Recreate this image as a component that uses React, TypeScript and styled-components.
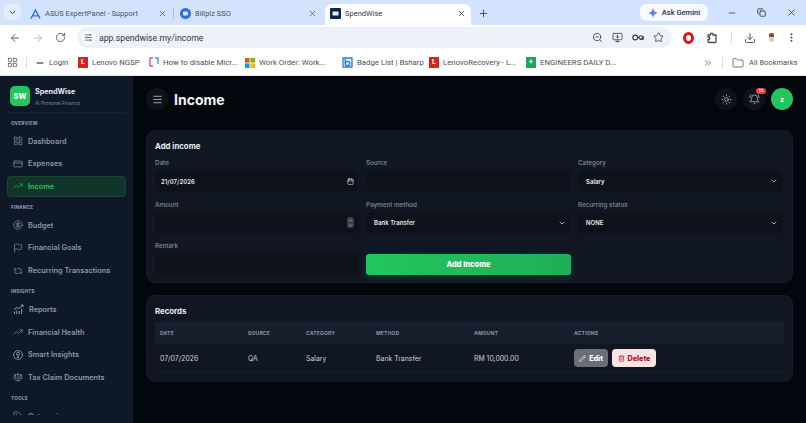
import React from 'react';
import styled, { createGlobalStyle } from 'styled-components';
import {
  ArrowLeft, ArrowRight, RotateCw, SlidersHorizontal, ZoomOut, MonitorDown, Star, Download,
  EllipsisVertical, LayoutGrid, ChevronDown, X, Plus, Minus, Copy, ChevronsRight, Folder,
  CreditCard, TrendingUp, CircleDollarSign, Flag, Repeat2, Scale,
  Tag, Menu, Sun, BellRing, Calendar, Pencil, Trash2, ChevronUp
} from 'lucide-react';

const chromeFont = 'Roboto, "Open Sans", sans-serif';

const GlobalStyle = createGlobalStyle`
  html, body { margin: 0; padding: 0; background: #03060c; }
  body { width: 806px; height: 423px; overflow: hidden; font-family: Inter, sans-serif; }
  * { box-sizing: border-box; }
`;

const Page = styled.div`
  width: 806px;
  height: 423px;
  display: flex;
  flex-direction: column;
  overflow: hidden;
`;

/* browser chrome */
const TabStrip = styled.div`
  height: 25px;
  background: #d3e3fd;
  display: flex;
  align-items: flex-end;
  padding-left: 4px;
  font-family: ${chromeFont};
  color: #3f4650;
`;

const TabMenu = styled.div`
  width: 17px;
  height: 16px;
  margin-bottom: 5px;
  margin-right: 4px;
  border-radius: 5px;
  background: #e3edfd;
  display: flex;
  align-items: center;
  justify-content: center;
  color: #1f2937;
`;

const Tab = styled.div<{ $w: number; $active?: boolean }>`
  width: ${(p) => p.$w}px;
  height: 21px;
  padding: 0 5px 2px;
  display: flex;
  align-items: center;
  gap: 4px;
  font-size: 7.5px;
  border-radius: 7px 7px 0 0;
  background: ${(p) => (p.$active ? '#ffffff' : 'transparent')};
  color: ${(p) => (p.$active ? '#303640' : '#4a5566')};
`;

const TabTitle = styled.span`
  flex: 1;
  white-space: nowrap;
`;

const TabGap = styled.div<{ $w: number; $line?: boolean }>`
  width: ${(p) => p.$w}px;
  height: 21px;
  padding-bottom: 2px;
  display: flex;
  align-items: center;
  justify-content: center;
  &::after {
    content: '';
    display: ${(p) => (p.$line ? 'block' : 'none')};
    width: 1px;
    height: 10px;
    background: #a9bcd8;
  }
`;

const NewTab = styled.div`
  width: 24px;
  height: 21px;
  padding-bottom: 2px;
  display: flex;
  align-items: center;
  justify-content: center;
  color: #333b47;
`;

const Gemini = styled.div`
  margin-left: 145px;
  width: 68px;
  height: 17px;
  margin-bottom: 4px;
  border-radius: 6px;
  background: #f6f9fe;
  display: flex;
  align-items: center;
  justify-content: center;
  gap: 4px;
  font-size: 7.5px;
  font-weight: 500;
  color: #2c3340;
`;

const WindowButtons = styled.div`
  flex: 1;
  height: 21px;
  padding: 0 9px 4px 19px;
  display: flex;
  align-items: center;
  justify-content: space-between;
  color: #1f2630;
`;

const Toolbar = styled.div`
  height: 25px;
  background: #ffffff;
  display: flex;
  align-items: center;
  padding: 0 9px 0 9px;
  color: #454b55;
  font-family: ${chromeFont};
`;

const NavIcons = styled.div`
  width: 68px;
  display: flex;
  align-items: center;
  gap: 11px;
`;

const Address = styled.div`
  width: 595px;
  height: 21px;
  border-radius: 11px;
  background: #edf2fa;
  display: flex;
  align-items: center;
  padding: 0 8px 0 5px;
  font-size: 8.7px;
  color: #2f3540;
  gap: 4px;
`;

const TuneWrap = styled.div`
  width: 13px;
  height: 13px;
  border-radius: 50%;
  background: #ffffff;
  display: flex;
  align-items: center;
  justify-content: center;
`;

const AddressText = styled.span`
  flex: 1;
`;

const AddressIcons = styled.div`
  display: flex;
  align-items: center;
  gap: 9px;
`;

const ToolIcons = styled.div`
  flex: 1;
  padding-left: 11px;
  display: flex;
  align-items: center;
  justify-content: space-between;
`;

const OperaMark = styled.div`
  width: 11px;
  height: 12px;
  border-radius: 50%;
  border: 3px solid #d8141c;
  background: #ffffff;
`;

const ToolDivider = styled.div`
  width: 1px;
  height: 11px;
  background: #d5dbe5;
`;

const ProfileDot = styled.div`
  width: 5px;
  height: 9px;
  border-radius: 2px;
  background: linear-gradient(#8a4a3a 45%, #d7cfc9 45%);
`;

const Bookmarks = styled.div`
  height: 26px;
  background: #ffffff;
  border-bottom: 1px solid #e4e7ec;
  display: flex;
  align-items: center;
  padding-left: 7px;
  color: #4a4f57;
  font-family: ${chromeFont};
  font-size: 7.8px;
`;

const BookmarkSep = styled.div<{ $mx: number }>`
  width: 1px;
  height: 11px;
  background: #d5dbe5;
  margin: 0 ${(p) => p.$mx}px;
`;

const Bookmark = styled.div<{ $w: number }>`
  width: ${(p) => p.$w}px;
  display: flex;
  align-items: center;
  gap: 4px;
  white-space: nowrap;
  flex-shrink: 0;
`;

const BookmarkEnd = styled.div`
  margin-left: 77px;
  display: flex;
  align-items: center;
  gap: 5px;
  white-space: nowrap;
  font-size: 7.5px;
`;

const Fav = styled.div<{ $bg: string }>`
  width: 10px;
  height: 11px;
  flex-shrink: 0;
  background: ${(p) => p.$bg};
  color: #ffffff;
  font-size: 7px;
  font-weight: 700;
  line-height: 11px;
  text-align: center;
`;

/* app */
const AppShell = styled.div`
  flex: 1;
  min-height: 0;
  display: flex;
  background: #03060c;
`;

const Sidebar = styled.aside`
  width: 133px;
  flex-shrink: 0;
  background: #0f1826;
  padding: 10px 7px 8px;
  display: flex;
  flex-direction: column;
`;

const Brand = styled.div`
  height: 27px;
  flex-shrink: 0;
  display: flex;
  align-items: flex-start;
  gap: 5px;
  padding: 0 3px;
  border-bottom: 1px solid #182232;
`;

const BrandLogo = styled.div`
  width: 20px;
  height: 20px;
  border-radius: 5px;
  background: #22c55e;
  color: #ffffff;
  display: flex;
  align-items: center;
  justify-content: center;
  font-size: 7.5px;
  font-weight: 800;
`;

const BrandText = styled.div`
  padding-top: 1px;
`;

const BrandName = styled.div`
  font-size: 7.2px;
  font-weight: 700;
  color: #e6ebf2;
  line-height: 10px;
`;

const BrandSub = styled.div`
  font-size: 4.8px;
  color: #7d8899;
  line-height: 8px;
  margin-top: 2px;
`;

const Nav = styled.nav`
  flex: 1;
  min-height: 0;
  overflow: hidden;
  display: flex;
  flex-direction: column;
`;

const SectionLabel = styled.div<{ $first?: boolean }>`
  font-size: 4.6px;
  font-weight: 800;
  letter-spacing: 0.2px;
  color: #8492a6;
  height: 8px;
  line-height: 8px;
  padding-left: 4px;
  flex-shrink: 0;
  margin-top: ${(p) => (p.$first ? '6.7px' : '5.4px')};
  margin-bottom: 3px;
`;

const NavItem = styled.div<{ $active?: boolean }>`
  height: 21px;
  flex-shrink: 0;
  margin-bottom: 1.6px;
  display: flex;
  align-items: center;
  gap: 5px;
  padding-left: 5px;
  border-radius: 4px;
  font-size: 7.3px;
  font-weight: 600;
  color: ${(p) => (p.$active ? '#22c55e' : '#8b98ab')};
  background: ${(p) => (p.$active ? '#12352b' : 'transparent')};
  border: 1px solid ${(p) => (p.$active ? '#194535' : 'transparent')};
`;

const Main = styled.main`
  flex: 1;
  min-width: 0;
  padding: 12px 13px 0;
  display: flex;
  flex-direction: column;
`;

const Header = styled.header`
  display: flex;
  align-items: center;
  height: 22px;
  margin-bottom: 20px;
`;

const RoundButton = styled.div`
  position: relative;
  width: 22px;
  height: 22px;
  border-radius: 50%;
  background: #0e131b;
  color: #cfd6e0;
  display: flex;
  align-items: center;
  justify-content: center;
`;

const PageTitle = styled.h1`
  flex: 1;
  margin: 0 0 0 6px;
  font-size: 14px;
  font-weight: 700;
  color: #f1f4f8;
`;

const HeaderActions = styled.div`
  display: flex;
  gap: 6px;
`;

const Badge = styled.span`
  position: absolute;
  top: 0;
  right: -1px;
  width: 10px;
  height: 6px;
  border-radius: 3px;
  background: #ef4444;
  color: #ffffff;
  font-size: 4px;
  font-weight: 700;
  line-height: 6px;
  text-align: center;
`;

const Avatar = styled.div`
  width: 22px;
  height: 22px;
  border-radius: 50%;
  background: #22c55e;
  color: #ffffff;
  font-size: 7px;
  font-weight: 700;
  display: flex;
  align-items: center;
  justify-content: center;
`;

const Card = styled.section<{ $h: number; $mb?: number }>`
  height: ${(p) => p.$h}px;
  margin-bottom: ${(p) => p.$mb ?? 0}px;
  border-radius: 9px;
  background: #101723;
  border: 1px solid #131b28;
  padding: 9px 8px 8px;
`;

const CardTitle = styled.h2`
  margin: 0;
  font-size: 7.8px;
  font-weight: 700;
  line-height: 12px;
  color: #e9edf3;
`;

const FormGrid = styled.div`
  margin-top: 5px;
  display: grid;
  grid-template-columns: 204px 205px 205px;
  column-gap: 7px;
`;

const Field = styled.div`
  height: 41.5px;
  display: flex;
  flex-direction: column;
`;

const FieldLabel = styled.label`
  font-size: 6.3px;
  font-weight: 500;
  line-height: 10px;
  height: 10px;
  margin: 1px 0 2px;
  color: #838d9d;
`;

const Control = styled.div`
  height: 22px;
  border-radius: 5px;
  background: #0c111a;
  border: 1px solid #0f1520;
  display: flex;
  align-items: center;
  justify-content: space-between;
  padding: 0 4px 0 5px;
  font-size: 5.9px;
  font-weight: 600;
  color: #e8ecf2;
  letter-spacing: 0.1px;
`;

const SelectControl = styled(Control)`
  padding-left: 7px;
`;

const Spinner = styled.div`
  width: 7px;
  height: 11px;
  border-radius: 2px;
  background: #3a3f47;
  color: #d3d7dd;
  display: flex;
  flex-direction: column;
  align-items: center;
  justify-content: center;
`;

const SubmitCell = styled.div`
  display: flex;
  align-items: flex-end;
  height: 35px;
`;

const SubmitButton = styled.div`
  width: 100%;
  height: 21px;
  border-radius: 3px;
  background: linear-gradient(90deg, #22c55e, #1fae55);
  box-shadow: 0 3px 8px rgba(34, 197, 94, 0.18);
  color: #ffffff;
  font-size: 7.5px;
  font-weight: 800;
  display: flex;
  align-items: center;
  justify-content: center;
`;

const Table = styled.div`
  margin-top: 5px;
`;

const TableRow = styled.div<{ $head?: boolean }>`
  display: grid;
  grid-template-columns: 88px 58px 70px 98px 100px 1fr;
  align-items: center;
  padding-left: 5px;
  height: ${(p) => (p.$head ? '22px' : '29px')};
  background: ${(p) => (p.$head ? '#171e2c' : 'transparent')};
  border-bottom: ${(p) => (p.$head ? 'none' : '1px solid #171e2b')};
  font-size: ${(p) => (p.$head ? '5px' : '6.9px')};
  font-weight: ${(p) => (p.$head ? 700 : 400)};
  color: ${(p) => (p.$head ? '#8b95a6' : '#c9cfd8')};
  letter-spacing: ${(p) => (p.$head ? '0.2px' : '0')};
`;

const Actions = styled.div`
  display: flex;
  gap: 4px;
`;

const ActionButton = styled.div<{ $kind: 'edit' | 'delete' }>`
  height: 18px;
  width: ${(p) => (p.$kind === 'edit' ? '34px' : '44px')};
  border-radius: 4px;
  background: ${(p) => (p.$kind === 'edit' ? '#6b6f75' : '#fde3e3')};
  color: ${(p) => (p.$kind === 'edit' ? '#ffffff' : '#a3162a')};
  font-size: 7.2px;
  font-weight: 800;
  display: flex;
  align-items: center;
  justify-content: center;
  gap: 3px;
`;

const AsusMark = () => (
  <svg width="11" height="12" viewBox="0 0 12 12" fill="none" stroke="#2f6fe0" strokeWidth="1.5">
    <path d="M1 11 L6 1.5 L11 11 M3.5 8 L8.5 8" />
  </svg>
);

const BillplzMark = () => (
  <svg width="11" height="11" viewBox="0 0 11 11">
    <circle cx="5.5" cy="5.5" r="5.5" fill="#2f6fe0" />
    <rect x="3" y="3.5" width="5" height="4" rx="1" fill="#dbe8fd" />
  </svg>
);

const SpendMark = () => (
  <svg width="11" height="11" viewBox="0 0 11 11">
    <rect width="11" height="11" rx="1" fill="#0f2747" />
    <rect x="2.5" y="3.5" width="6" height="4" fill="#e5eefb" />
  </svg>
);

const GeminiMark = () => (
  <svg width="10" height="10" viewBox="0 0 10 10">
    <path d="M5 0 Q5.6 4.4 10 5 Q5.6 5.6 5 10 Q4.4 5.6 0 5 Q4.4 4.4 5 0Z" fill="#4d8bf0" />
    <path d="M5 0 Q5.6 4.4 10 5 L5 5Z" fill="#e8674f" />
  </svg>
);

const WindowsMark = () => (
  <svg width="10" height="10" viewBox="0 0 10 10">
    <rect width="4.6" height="4.6" fill="#f25022" />
    <rect x="5.4" width="4.6" height="4.6" fill="#7fba00" />
    <rect y="5.4" width="4.6" height="4.6" fill="#00a4ef" />
    <rect x="5.4" y="5.4" width="4.6" height="4.6" fill="#ffb900" />
  </svg>
);

const BracketMark = () => (
  <svg width="10" height="11" viewBox="0 0 10 11" fill="none" strokeWidth="1.4">
    <path d="M4 1 H1 V9 H4" stroke="#e2557f" />
    <path d="M6 1 H9 V7" stroke="#3aa0c9" />
  </svg>
);

const BadgeMark = () => (
  <svg width="11" height="11" viewBox="0 0 11 11" fill="none" stroke="#2b7fc4" strokeWidth="1.3">
    <path d="M1 1 H10 V10 H1Z" fill="#dcecf8" />
    <circle cx="5.5" cy="6.5" r="2.2" />
    <path d="M3.3 2 V6.5" />
  </svg>
);

const KeyMark = () => (
  <svg width="12" height="11" viewBox="0 0 12 11" fill="none" stroke="currentColor" strokeWidth="1.1">
    <circle cx="3.2" cy="5.5" r="2.4" />
    <circle cx="8.8" cy="5.5" r="1.8" />
    <path d="M5.6 5.5 H7 M8 7.3 H11.2 V4" />
  </svg>
);

const ExtensionMark = () => (
  <svg width="12" height="12" viewBox="0 0 12 12" fill="none" stroke="currentColor" strokeWidth="1.3">
    <path d="M2 3 H4.5 V1.6 Q6 0.6 7 1.6 V3 H10 V9.5 Q10 10.5 9 10.5 H3 Q2 10.5 2 9.5 V7.5 H3.2 Q4.4 6.2 3.2 5 H2Z" />
  </svg>
);

const ReportsIcon = () => (
  <svg width="11" height="11" viewBox="0 0 11 11" fill="none" stroke="currentColor" strokeWidth="1">
    <path d="M1.5 10 V7.5 M3.8 10 V6.5 M6.2 10 V7 M8.6 10 V5" />
    <path d="M1 5.5 L4 3.5 L6 4.5 L10 1 M7.8 1 H10 V3" />
  </svg>
);

const InsightsIcon = () => (
  <svg width="10" height="10" viewBox="0 0 10 10" fill="none" stroke="currentColor" strokeWidth="0.9">
    <circle cx="5" cy="5" r="4.4" />
    <circle cx="5" cy="3.9" r="1.5" />
    <path d="M5 5.4 V8 M3.8 7.4 H6.2" />
  </svg>
);

const iconProps = { size: 10, strokeWidth: 1.6 };

const navGroups = [
  {
    label: 'OVERVIEW',
    items: [
      { name: 'Dashboard', icon: <LayoutGrid {...iconProps} /> },
      { name: 'Expenses', icon: <CreditCard {...iconProps} /> },
      { name: 'Income', icon: <TrendingUp {...iconProps} />, active: true }
    ]
  },
  {
    label: 'FINANCE',
    items: [
      { name: 'Budget', icon: <CircleDollarSign {...iconProps} /> },
      { name: 'Financial Goals', icon: <Flag {...iconProps} /> },
      { name: 'Recurring Transactions', icon: <Repeat2 {...iconProps} /> }
    ]
  },
  {
    label: 'INSIGHTS',
    items: [
      { name: 'Reports', icon: <ReportsIcon /> },
      { name: 'Financial Health', icon: <TrendingUp {...iconProps} /> },
      { name: 'Smart Insights', icon: <InsightsIcon /> },
      { name: 'Tax Claim Documents', icon: <Scale {...iconProps} /> }
    ]
  },
  {
    label: 'TOOLS',
    items: [{ name: 'Categories', icon: <Tag {...iconProps} /> }]
  }
];

const BrowserChrome: React.FC = () => (
  <>
    <TabStrip>
      <TabMenu>
        <ChevronDown size={9} strokeWidth={2.5} />
      </TabMenu>
      <Tab $w={147}>
        <AsusMark />
        <TabTitle>ASUS ExpertPanel - Support</TabTitle>
        <X size={9} strokeWidth={2} />
      </Tab>
      <TabGap $w={3} $line />
      <Tab $w={147}>
        <BillplzMark />
        <TabTitle>Billplz SSO</TabTitle>
        <X size={9} strokeWidth={2} />
      </Tab>
      <TabGap $w={3} />
      <Tab $w={146} $active>
        <SpendMark />
        <TabTitle>SpendWise</TabTitle>
        <X size={9} strokeWidth={2} />
      </Tab>
      <NewTab>
        <Plus size={11} strokeWidth={1.8} />
      </NewTab>
      <Gemini>
        <GeminiMark />
        Ask Gemini
      </Gemini>
      <WindowButtons>
        <Minus size={10} strokeWidth={1.6} />
        <Copy size={9} strokeWidth={2} />
        <X size={11} strokeWidth={1.6} />
      </WindowButtons>
    </TabStrip>
    <Toolbar>
      <NavIcons>
        <ArrowLeft size={12} strokeWidth={1.8} />
        <ArrowRight size={12} strokeWidth={1.8} color="#a9adb3" />
        <RotateCw size={11} strokeWidth={1.8} />
      </NavIcons>
      <Address>
        <TuneWrap>
          <SlidersHorizontal size={9} strokeWidth={1.8} />
        </TuneWrap>
        <AddressText>app.spendwise.my/income</AddressText>
        <AddressIcons>
          <ZoomOut size={11} strokeWidth={1.7} />
          <MonitorDown size={11} strokeWidth={1.7} />
          <KeyMark />
          <Star size={11} strokeWidth={1.7} />
        </AddressIcons>
      </Address>
      <ToolIcons>
        <OperaMark />
        <ExtensionMark />
        <ToolDivider />
        <Download size={12} strokeWidth={1.8} />
        <ProfileDot />
        <EllipsisVertical size={11} strokeWidth={2.2} />
      </ToolIcons>
    </Toolbar>
    <Bookmarks>
      <LayoutGrid size={11} strokeWidth={1.6} />
      <BookmarkSep $mx={8} />
      <Bookmark $w={43}>
        <Minus size={10} strokeWidth={2.6} color="#111111" />
        Login
      </Bookmark>
      <Bookmark $w={71}>
        <Fav $bg="#d9231f">L</Fav>
        Lenovo NGSP
      </Bookmark>
      <Bookmark $w={96}>
        <BracketMark />
        How to disable Micr...
      </Bookmark>
      <Bookmark $w={97}>
        <WindowsMark />
        Work Order: Work...
      </Bookmark>
      <Bookmark $w={87}>
        <BadgeMark />
        Badge List | Bsharp
      </Bookmark>
      <Bookmark $w={97}>
        <Fav $bg="#d9231f">L</Fav>
        LenovoRecovery - L...
      </Bookmark>
      <Bookmark $w={100}>
        <Fav $bg="#23a455">+</Fav>
        ENGINEERS DAILY D...
      </Bookmark>
      <BookmarkEnd>
        <ChevronsRight size={10} strokeWidth={1.8} />
        <BookmarkSep $mx={4} />
        <Folder size={12} strokeWidth={1.5} />
        All Bookmarks
      </BookmarkEnd>
    </Bookmarks>
  </>
);

const App: React.FC = () => (
  <Page>
    <GlobalStyle />
    <BrowserChrome />
    <AppShell>
      <Sidebar>
        <Brand>
          <BrandLogo>SW</BrandLogo>
          <BrandText>
            <BrandName>SpendWise</BrandName>
            <BrandSub>AI Personal Finance</BrandSub>
          </BrandText>
        </Brand>
        <Nav>
          {navGroups.map((group, i) => (
            <React.Fragment key={group.label}>
              <SectionLabel $first={i === 0}>{group.label}</SectionLabel>
              {group.items.map((item) => (
                <NavItem key={item.name} $active={item.active}>
                  {item.icon}
                  {item.name}
                </NavItem>
              ))}
            </React.Fragment>
          ))}
        </Nav>
      </Sidebar>
      <Main>
        <Header>
          <RoundButton>
            <Menu size={11} strokeWidth={1.6} />
          </RoundButton>
          <PageTitle>Income</PageTitle>
          <HeaderActions>
            <RoundButton>
              <Sun size={11} strokeWidth={1.5} />
            </RoundButton>
            <RoundButton>
              <BellRing size={11} strokeWidth={1.5} />
              <Badge>13</Badge>
            </RoundButton>
            <Avatar>z</Avatar>
          </HeaderActions>
        </Header>
        <Card $h={153} $mb={12}>
          <CardTitle>Add income</CardTitle>
          <FormGrid>
            <Field>
              <FieldLabel>Date</FieldLabel>
              <Control>
                21/07/2026
                <Calendar size={7} strokeWidth={2} />
              </Control>
            </Field>
            <Field>
              <FieldLabel>Source</FieldLabel>
              <Control />
            </Field>
            <Field>
              <FieldLabel>Category</FieldLabel>
              <SelectControl>
                Salary
                <ChevronDown size={8} strokeWidth={2.2} />
              </SelectControl>
            </Field>
            <Field>
              <FieldLabel>Amount</FieldLabel>
              <Control>
                <span />
                <Spinner>
                  <ChevronUp size={5} strokeWidth={3} />
                  <ChevronDown size={5} strokeWidth={3} />
                </Spinner>
              </Control>
            </Field>
            <Field>
              <FieldLabel>Payment method</FieldLabel>
              <SelectControl>
                Bank Transfer
                <ChevronDown size={8} strokeWidth={2.2} />
              </SelectControl>
            </Field>
            <Field>
              <FieldLabel>Recurring status</FieldLabel>
              <SelectControl>
                NONE
                <ChevronDown size={8} strokeWidth={2.2} />
              </SelectControl>
            </Field>
            <Field>
              <FieldLabel>Remark</FieldLabel>
              <Control />
            </Field>
            <SubmitCell>
              <SubmitButton>Add Income</SubmitButton>
            </SubmitCell>
          </FormGrid>
        </Card>
        <Card $h={87}>
          <CardTitle>Records</CardTitle>
          <Table>
            <TableRow $head>
              <span>DATE</span>
              <span>SOURCE</span>
              <span>CATEGORY</span>
              <span>METHOD</span>
              <span>AMOUNT</span>
              <span>ACTIONS</span>
            </TableRow>
            <TableRow>
              <span>07/07/2026</span>
              <span>QA</span>
              <span>Salary</span>
              <span>Bank Transfer</span>
              <span>RM 10,000.00</span>
              <Actions>
                <ActionButton $kind="edit">
                  <Pencil size={7} strokeWidth={2} />
                  Edit
                </ActionButton>
                <ActionButton $kind="delete">
                  <Trash2 size={7} strokeWidth={2} />
                  Delete
                </ActionButton>
              </Actions>
            </TableRow>
          </Table>
        </Card>
      </Main>
    </AppShell>
  </Page>
);

export default App;
